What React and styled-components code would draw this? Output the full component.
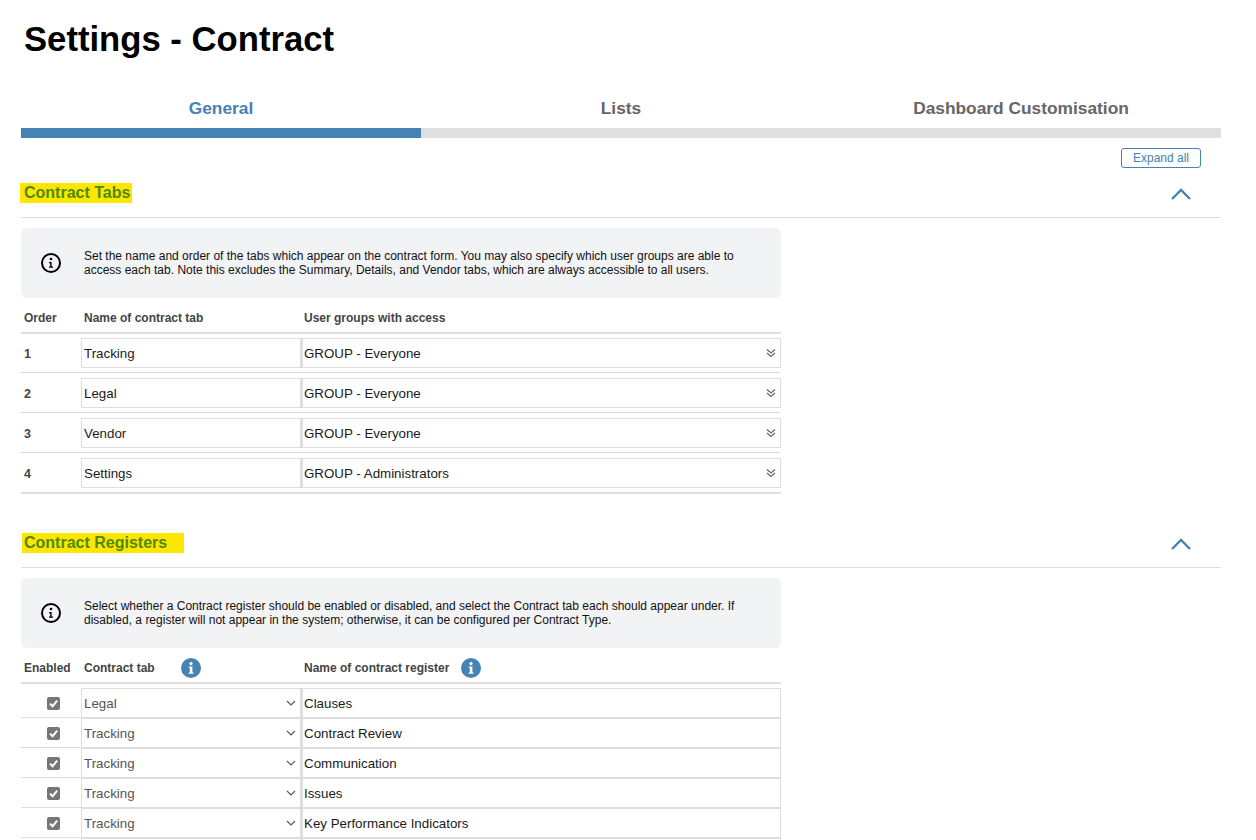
import React from "react";
import styled, { createGlobalStyle } from "styled-components";

const Global = createGlobalStyle`
  html, body { margin: 0; padding: 0; height: 840px; overflow: hidden; background: #fff; }
  body { font-family: "Liberation Sans", Arial, sans-serif; color: #111; }
`;

const Page = styled.div`
  width: 1200px;
  padding-left: 21px;
`;
const Title = styled.h1`
  margin: 0;
  padding: 18px 0 0 3px;
  font-size: 34.67px;
  line-height: 42px;
  font-weight: 700;
  color: #000;
`;
const Tabs = styled.div`
  display: grid;
  grid-template-columns: repeat(3, 1fr);
  margin-top: 34px;
`;
const Tab = styled.div`
  height: 34px;
  line-height: 29px;
  text-align: center;
  font-size: 17.33px;
  font-weight: 700;
  color: ${(p) => (p.$active ? "#4682b4" : "#666")};
  border-bottom: 10px solid ${(p) => (p.$active ? "#4682b4" : "#dfdfdf")};
`;
const ExpandRow = styled.div`
  display: flex;
  justify-content: flex-end;
  padding: 10px 20px 0 0;
`;
const ExpandButton = styled.button`
  width: 80px;
  height: 20px;
  padding: 0;
  background: #fff;
  border: 1px solid #4682b4;
  border-radius: 3px;
  color: #4682b4;
  font: 12px "Liberation Sans", Arial, sans-serif;
`;
const SectionHead = styled.div`
  display: flex;
  align-items: flex-start;
  justify-content: space-between;
  box-sizing: border-box;
  height: 50px;
  padding: 15px 30px 0 0;
  border-bottom: 1px solid #dedede;
`;
const SectionTitle = styled.h2`
  margin: 0 0 0 ${(p) => p.$offset}px;
  padding: 0 ${(p) => p.$right}px 0 ${(p) => p.$left}px;
  background: #ffe600;
  height: 20px;
  line-height: 20px;
  font-size: 16px;
  font-weight: 700;
  color: #4d8a00;
`;
const Collapse = styled.svg`
  width: 20px;
  height: 12px;
  margin-top: 5px;
  display: block;
`;
const Section = styled.section`
  width: 1200px;
  margin-bottom: ${(p) => p.$gap || 0}px;
`;
const InfoBox = styled.div`
  display: flex;
  align-items: center;
  width: 760px;
  height: 70px;
  margin-top: 10px;
  background: #f2f3f5;
  border-radius: 6px;
`;
const InfoIconWrap = styled.div`
  flex: 0 0 60px;
  display: flex;
  justify-content: center;
  margin-right: 3px;
`;
const InfoText = styled.p`
  margin: 0;
  width: 670px;
  font-size: 12px;
  line-height: 14px;
  color: #111;
`;
const Table = styled.div`
  width: 760px;
`;
const HeadRow = styled.div`
  display: grid;
  grid-template-columns: 60px 220px 480px;
  box-sizing: border-box;
  height: 36px;
  padding-top: 5px;
  border-bottom: 2px solid #dedede;
`;
const HeadCell = styled.div`
  display: flex;
  align-items: center;
  padding-left: 3px;
  font-size: 12px;
  font-weight: 700;
  color: #444;
`;
const HelpIcon = styled.svg`
  width: 20px;
  height: 20px;
  margin-left: ${(p) => p.$gap}px;
`;
const TabRow = styled.div`
  display: grid;
  grid-template-columns: 60px 220px 480px;
  padding: 5px 0 4px;
  border-bottom: 1px solid #dedede;
  &:first-child { padding-top: 4px; }
  &:last-child { border-bottom-width: 2px; }
`;
const Order = styled.div`
  display: flex;
  align-items: center;
  padding: 1px 0 0 3px;
  font-size: 12.5px;
  font-weight: 700;
  color: #444;
`;
const Field = styled.div`
  display: flex;
  align-items: center;
  justify-content: space-between;
  box-sizing: border-box;
  height: 30px;
  padding: 0 ${(p) => (p.$wide ? 1 : 2)}px;
  font-size: 13.33px;
  color: ${(p) => p.$color || "#1a1a1a"};
  border: 1px solid #dedede;
  border-left-width: ${(p) => (p.$wide ? 2 : 1)}px;
`;
const RegisterList = styled.div`
  padding-top: 4px;
`;
const RegisterRow = styled.div`
  display: grid;
  grid-template-columns: 60px 220px 480px;
  height: 30px;
`;
const CheckCell = styled.div`
  display: flex;
  align-items: center;
  justify-content: center;
  box-sizing: border-box;
  height: 30px;
  padding: 1px 0 0 5px;
  border-bottom: 1px solid #dedede;
`;
const Check = styled.span`
  display: flex;
  align-items: center;
  justify-content: center;
  width: 13px;
  height: 13px;
  background: #767676;
  border-radius: 2px;
`;
const Chevron = styled.svg`
  width: ${(p) => p.$w}px;
  height: ${(p) => p.$h}px;
  margin-right: ${(p) => p.$mr}px;
  flex: none;
`;

const DoubleChevron = () => (
  <Chevron $w={10} $h={10} $mr={3} viewBox="0 0 10 10" fill="none" stroke="#666" strokeWidth="1.2">
    <path d="M1 1.5 5 5 9 1.5" />
    <path d="M1 5 5 8.5 9 5" />
  </Chevron>
);
const SingleChevron = () => (
  <Chevron $w={10} $h={6} $mr={2} viewBox="0 0 10 6" fill="none" stroke="#555" strokeWidth="1.1">
    <path d="M1 1 5 5 9 1" />
  </Chevron>
);
const CollapseIcon = () => (
  <Collapse viewBox="0 0 20 12" fill="none" stroke="#4682b4" strokeWidth="2.4">
    <path d="M1 11 10 2 19 11" />
  </Collapse>
);
const InfoIcon = () => (
  <svg width="20" height="20" viewBox="0 0 20 20" fill="none">
    <circle cx="10" cy="10" r="9" stroke="#000" strokeWidth="2" />
    <circle cx="10" cy="6" r="1.3" fill="#000" />
    <path d="M8 9h2.6v4.6H12v1.2H8v-1.2h1.2V10.2H8z" fill="#000" />
  </svg>
);
const Help = ({ gap }) => (
  <HelpIcon $gap={gap} viewBox="0 0 20 20">
    <circle cx="10" cy="10" r="10" fill="#4682b4" />
    <circle cx="10" cy="5.6" r="1.6" fill="#fff" />
    <path d="M7.8 8.4h3.6v6h1.1v1.4H7.6v-1.4h1.2v-4.6h-1z" fill="#fff" />
  </HelpIcon>
);
const CheckMark = () => (
  <svg width="11" height="11" viewBox="0 0 11 11" fill="none" stroke="#fff" strokeWidth="2">
    <path d="M2 5.6 4.6 8.2 9.2 2.6" />
  </svg>
);

const tabRows = [
  [1, "Tracking", "GROUP - Everyone"],
  [2, "Legal", "GROUP - Everyone"],
  [3, "Vendor", "GROUP - Everyone"],
  [4, "Settings", "GROUP - Administrators"],
];
const registers = [
  ["Legal", "Clauses"],
  ["Tracking", "Contract Review"],
  ["Tracking", "Communication"],
  ["Tracking", "Issues"],
  ["Tracking", "Key Performance Indicators"],
];

export default function App() {
  return (
    <Page>
      <Global />
      <Title>Settings - Contract</Title>
      <Tabs>
        <Tab $active>General</Tab>
        <Tab>Lists</Tab>
        <Tab>Dashboard Customisation</Tab>
      </Tabs>
      <ExpandRow>
        <ExpandButton>Expand all</ExpandButton>
      </ExpandRow>

      <Section $gap={24}>
        <SectionHead>
          <SectionTitle $offset={-1} $left={4} $right={2}>Contract Tabs</SectionTitle>
          <CollapseIcon />
        </SectionHead>
        <InfoBox>
          <InfoIconWrap><InfoIcon /></InfoIconWrap>
          <InfoText>
            Set the name and order of the tabs which appear on the contract form. You may also specify which user groups are able to access each tab. Note this excludes the Summary, Details, and Vendor tabs, which are always accessible to all users.
          </InfoText>
        </InfoBox>
        <Table>
          <HeadRow>
            <HeadCell>Order</HeadCell>
            <HeadCell>Name of contract tab</HeadCell>
            <HeadCell>User groups with access</HeadCell>
          </HeadRow>
          <div>
            {tabRows.map(([n, name, group]) => (
              <TabRow key={n}>
                <Order>{n}</Order>
                <Field>{name}</Field>
                <Field $wide>
                  {group}
                  <DoubleChevron />
                </Field>
              </TabRow>
            ))}
          </div>
        </Table>
      </Section>

      <Section>
        <SectionHead>
          <SectionTitle $offset={1} $left={2} $right={17}>Contract Registers</SectionTitle>
          <CollapseIcon />
        </SectionHead>
        <InfoBox>
          <InfoIconWrap><InfoIcon /></InfoIconWrap>
          <InfoText>
            Select whether a Contract register should be enabled or disabled, and select the Contract tab each should appear under. If disabled, a register will not appear in the system; otherwise, it can be configured per Contract Type.
          </InfoText>
        </InfoBox>
        <Table>
          <HeadRow>
            <HeadCell>Enabled</HeadCell>
            <HeadCell>Contract tab<Help gap={26} /></HeadCell>
            <HeadCell>Name of contract register<Help gap={12} /></HeadCell>
          </HeadRow>
          <RegisterList>
            {registers.map(([tab, name]) => (
              <RegisterRow key={name}>
                <CheckCell><Check><CheckMark /></Check></CheckCell>
                <Field $color="#555">
                  {tab}
                  <SingleChevron />
                </Field>
                <Field $wide>{name}</Field>
              </RegisterRow>
            ))}
            <RegisterRow>
              <CheckCell />
              <Field />
              <Field $wide />
            </RegisterRow>
          </RegisterList>
        </Table>
      </Section>
    </Page>
  );
}
